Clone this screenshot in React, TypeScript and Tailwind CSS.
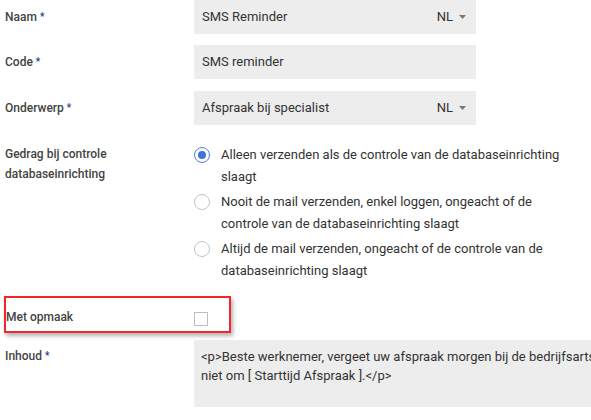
import React from 'react';

const Req = () => <span className="ml-[3px] text-[10px] align-top text-[#1a3a8c]">*</span>;

const Label: React.FC<{ children: React.ReactNode; required?: boolean }> = ({ children, required }) => (
    <div className="w-[189px] shrink-0 text-[12px] leading-[20px] font-medium text-[#444]">
        {children}
        {required && <Req />}
    </div>
);

const Caret = () => (
    <svg width="7" height="4" viewBox="0 0 7 4" className="ml-[6px]">
        <path d="M0 0h7L3.5 4z" fill="#777" />
    </svg>
);

const Radio: React.FC<{ checked?: boolean; lines: string[] }> = ({ checked, lines }) => (
    <div className="flex items-start">
        <span
            className={`mt-[3px] w-[16px] h-[16px] shrink-0 rounded-full border flex items-center justify-center ${
                checked ? 'border-[#4a7ee8]' : 'border-[#c4c4c4]'
            }`}
        >
            {checked && <span className="w-[8px] h-[8px] rounded-full bg-[#3e73e0]" />}
        </span>
        <div className="ml-[11px] text-[13px] leading-[22px] text-[#333]">
            {lines.map((l) => (
                <div key={l}>{l}</div>
            ))}
        </div>
    </div>
);

export default function App() {
    return (
        <div className="w-[591px] h-[420px] overflow-hidden bg-white font-['Roboto',sans-serif]">
            <div className="flex items-center pl-[5px] h-[34px]">
                <Label required>Naam</Label>
                <div className="w-[282px] h-[34px] bg-[#ededed] flex items-center pl-[8px] pr-[10px] text-[13px] text-[#333]">
                    <span className="flex-1">SMS Reminder</span>
                    <span>NL</span>
                    <Caret />
                </div>
            </div>
            <div className="flex items-center pl-[5px] h-[34px] mt-[11px]">
                <Label required>Code</Label>
                <div className="w-[282px] h-[34px] bg-[#ededed] flex items-center pl-[8px] text-[13px] text-[#333]">
                    SMS reminder
                </div>
            </div>
            <div className="flex items-center pl-[5px] h-[34px] mt-[12px]">
                <Label required>Onderwerp</Label>
                <div className="w-[282px] h-[34px] bg-[#ededed] flex items-center pl-[8px] pr-[10px] text-[13px] text-[#333]">
                    <span className="flex-1">Afspraak bij specialist</span>
                    <span>NL</span>
                    <Caret />
                </div>
            </div>
            <div className="flex items-start pl-[5px] mt-[19px]">
                <Label>
                    Gedrag bij controle
                    <br />
                    databaseinrichting
                </Label>
                <div className="flex flex-col gap-[3px]">
                    <Radio checked lines={['Alleen verzenden als de controle van de databaseinrichting', 'slaagt']} />
                    <Radio lines={['Nooit de mail verzenden, enkel loggen, ongeacht of de', 'controle van de databaseinrichting slaagt']} />
                    <Radio lines={['Altijd de mail verzenden, ongeacht of de controle van de', 'databaseinrichting slaagt']} />
                </div>
            </div>
            <div className="ml-[4px] mt-[14px] w-[227px] h-[37px] border-2 border-[#f2262c] shadow-[2px_3px_4px_rgba(0,0,0,0.3)] flex items-center">
                <div className="mt-[5px] w-[188px] shrink-0 text-[12px] font-medium text-[#444]">Met opmaak</div>
                <span className="mt-[9px] w-[14px] h-[14px] border border-[#bdbdbd] bg-white" />
            </div>
            <div className="flex items-start pl-[5px] mt-[7px]">
                <div className="pt-[6px]">
                    <Label required>Inhoud</Label>
                </div>
                <div className="w-[420px] h-[67px] shrink-0 bg-[#ededed] pl-[7px] pt-[7px] text-[13px] leading-[19px] text-[#333] whitespace-nowrap overflow-hidden">
                    <div>&lt;p&gt;Beste werknemer, vergeet uw afspraak morgen bij de bedrijfsarts</div>
                    <div>niet om [ Starttijd Afspraak ].&lt;/p&gt;</div>
                </div>
            </div>
        </div>
    );
}
